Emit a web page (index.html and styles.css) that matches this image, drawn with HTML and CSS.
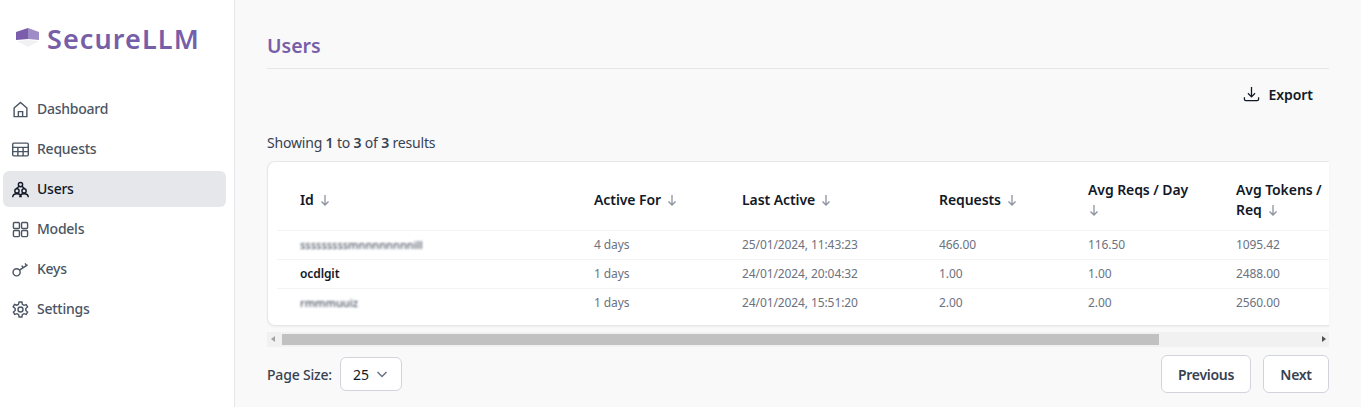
FILE: index.html
```html
<!DOCTYPE html>
<html lang="en">
<head>
<meta charset="utf-8">
<title>Users - SecureLLM</title>
<link rel="stylesheet" href="styles.css">
</head>
<body>
<div class="app">
  <aside class="sidebar">
    <div class="logo">
      <svg class="logo-mark" width="24" height="20" viewBox="0 0 24 20"><path d="M0 4 12 0v11L0 12z" fill="#7a5dab"/><path d="M12 0l11 4v8l-11-1z" fill="#9f8cc6"/><path d="M1 13l11-1 11 1-11 6z" fill="#f1f0f3"/></svg>
      <span class="logo-text">SecureLLM</span>
    </div>
    <nav class="nav">
      <a class="nav-item"><svg class="nav-icon" viewBox="0 0 24 24"><path d="M3 10 12 2l9 8v12H3z M9 22v-7h6v7"/></svg><span>Dashboard</span></a>
      <a class="nav-item"><svg class="nav-icon" viewBox="0 0 24 24"><rect x="1" y="3" width="22" height="18" rx="1.500"/><path d="M1 9h22M1 15h22M8.300 9v12M15.700 9v12"/></svg><span>Requests</span></a>
      <a class="nav-item active"><svg class="nav-icon" viewBox="0 0 24 24"><circle cx="12" cy="5" r="3"/><circle cx="7" cy="14" r="3"/><circle cx="17" cy="14" r="3"/><path d="M1 23c0-3 2-5 6-5s6 2 6 5M11 23c0-3 2-5 6-5s6 2 6 5M6 11l4-3.500M18 11l-4-3.500"/></svg><span>Users</span></a>
      <a class="nav-item"><svg class="nav-icon" viewBox="0 0 24 24"><rect x="2" y="2" width="8.500" height="8.500" rx="1.500"/><rect x="13.500" y="2" width="8.500" height="8.500" rx="1.500"/><rect x="2" y="13.500" width="8.500" height="8.500" rx="1.500"/><rect x="13.500" y="13.500" width="8.500" height="8.500" rx="1.500"/></svg><span>Models</span></a>
      <a class="nav-item"><svg class="nav-icon" viewBox="0 0 24 24"><circle cx="6.500" cy="16" r="5"/><path d="M10.500 13 22 5.500M16 9.500l-2.300-3M20.500 6.500 18.500 3.500"/></svg><span>Keys</span></a>
      <a class="nav-item"><svg class="nav-icon" viewBox="0 0 24 24"><path d="M10 1.500h4l.6 3.300 2.300 1.300 3.100-1.100 2 3.400-2.500 2.200v2.800l2.500 2.200-2 3.400-3.100-1.100-2.300 1.300-.6 3.300h-4l-.6-3.300-2.300-1.300-3.100 1.100-2-3.400 2.500-2.200v-2.800L1.600 8.300l2-3.400 3.100 1.100L9 4.800z"/><circle cx="12" cy="12" r="3.500"/></svg><span>Settings</span></a>
    </nav>
  </aside>
  <main class="main">
    <h1 class="title">Users</h1>
    <div class="toolbar">
      <button class="export"><svg class="export-icon" viewBox="0 0 24 24"><path d="M12 2v14M7 11l5 5 5-5M2 16.500v3A2 2 0 0 0 4 21.500h16a2 2 0 0 0 2-2v-3"/></svg>Export</button>
    </div>
    <p class="results">Showing <b>1</b> to <b>3</b> of <b>3</b> results</p>
    <div class="card">
      <table class="table">
        <thead>
          <tr>
            <th class="c-id">Id<svg class="sort" viewBox="0 0 12 12"><path d="M6 1v10M2.500 7.500 6 11l3.500-3.500"/></svg></th>
            <th class="c-active">Active For<svg class="sort" viewBox="0 0 12 12"><path d="M6 1v10M2.500 7.500 6 11l3.500-3.500"/></svg></th>
            <th class="c-last">Last Active<svg class="sort" viewBox="0 0 12 12"><path d="M6 1v10M2.500 7.500 6 11l3.500-3.500"/></svg></th>
            <th class="c-req">Requests<svg class="sort" viewBox="0 0 12 12"><path d="M6 1v10M2.500 7.500 6 11l3.500-3.500"/></svg></th>
            <th class="c-avg">Avg Reqs / Day<br><svg class="sort sort-wrap" viewBox="0 0 12 12"><path d="M6 1v10M2.500 7.500 6 11l3.500-3.500"/></svg></th>
            <th class="c-tok">Avg Tokens /<br>Req<svg class="sort" viewBox="0 0 12 12"><path d="M6 1v10M2.500 7.500 6 11l3.500-3.500"/></svg></th>
          </tr>
        </thead>
        <tbody>
          <tr><td class="id"><span class="blur">sssssssssmnnnnnnnnill</span></td><td>4 days</td><td>25/01/2024, 11:43:23</td><td>466.00</td><td>116.50</td><td>1095.42</td></tr>
          <tr><td class="id">ocdlgit</td><td>1 days</td><td>24/01/2024, 20:04:32</td><td>1.00</td><td>1.00</td><td>2488.00</td></tr>
          <tr><td class="id"><span class="blur">rmmmuuiz</span></td><td>1 days</td><td>24/01/2024, 15:51:20</td><td>2.00</td><td>2.00</td><td>2560.00</td></tr>
        </tbody>
      </table>
    </div>
    <div class="scrollbar">
      <span class="arrow arrow-left"></span>
      <div class="track"><div class="thumb"></div></div>
      <span class="arrow arrow-right"></span>
    </div>
    <div class="pager">
      <div class="size">
        <span class="size-label">Page Size:</span>
        <div class="select">25<svg class="chev" viewBox="0 0 12 12"><path d="M1.500 4 6 8.500 10.500 4"/></svg></div>
      </div>
      <div class="pager-buttons">
        <button class="btn">Previous</button>
        <button class="btn">Next</button>
      </div>
    </div>
  </main>
</div>
</body>
</html>
```
FILE: styles.css
```css
* { box-sizing: border-box; }
html, body { margin: 0; height: 100%; overflow: hidden; }
body { font-family: "Noto Sans", "Open Sans", sans-serif; background: #f9f9f9; color: #111827; }
.app { display: flex; height: 407px; }

.sidebar { width: 235px; flex: none; background: #fff; border-right: 1px solid #e5e7eb; padding: 0 8px 0 3px; }
.logo { display: flex; align-items: center; height: 76px; padding-left: 13px; gap: 7px; }
.logo-text { font-family: "Noto Sans", sans-serif; font-size: 27px; font-weight: 600; color: #775ea8; letter-spacing: 1.100px; }
.logo-mark { flex: none; }
.nav { display: flex; flex-direction: column; gap: 4px; margin-top: 15px; }
.nav-item { display: flex; align-items: center; height: 36px; padding-left: 8px; gap: 7px; border-radius: 6px; font-size: 14px; font-weight: 500; letter-spacing: -.25px; color: #4b5563; }
.nav-item span { margin-top: -2px; }
.nav-item.active { background: #e5e7eb; color: #111827; }
.nav-icon { width: 17px; height: 17px; flex: none; fill: none; stroke: currentColor; stroke-width: 2; margin-left: 1px; margin-right: 1px; }

.main { flex: 1; min-width: 0; padding: 32px 32px 0; display: flex; flex-direction: column; }
.title { margin: 0; height: 37px; font-size: 19.500px; line-height: 28px; font-weight: 600; color: #775ea8; border-bottom: 1px solid #e5e7eb; }
.toolbar { display: flex; justify-content: flex-end; height: 52px; padding-top: 7px; }
.export { display: flex; align-items: center; gap: 8px; height: 36px; padding: 0 16px 0 0; border: 0; background: none; font: 600 14px "Noto Sans", sans-serif; letter-spacing: -.05px; color: #111827; }
.export-icon { width: 17px; height: 18px; fill: none; stroke: #111827; stroke-width: 1.800; }
.results { margin: 12px 0 0; height: 28px; font-size: 14px; line-height: 20px; letter-spacing: -.18px; color: #374151; }
.results b { font-weight: 600; }

.card { height: 165px; background: #fff; border: 1px solid #e5e7eb; border-right: 0; border-radius: 8px 0 0 8px; box-shadow: 0 1px 2px rgba(0,0,0,.05); overflow: hidden; padding-left: 9px; }
.table { border-collapse: collapse; table-layout: fixed; width: 1100px; }
.table th { height: 68px; padding: 8px 0 0 23px; text-align: left; vertical-align: middle; font-size: 14px; line-height: 20px; font-weight: 600; letter-spacing: -.08px; color: #111827; }
.table td { height: 29px; padding: 0 0 0 23px; font-size: 12px; letter-spacing: -.1px; color: #6b7280; border-top: 1px solid #f3f4f6; white-space: nowrap; }
.table td.id { font-weight: 600; color: #111827; }
.c-id { width: 294px; }
.c-active { width: 148px; }
.c-last { width: 197px; }
.c-req { width: 149px; }
.c-avg { width: 148px; }
.c-tok { width: 164px; }
.sort { width: 12px; height: 12px; margin-left: 5px; fill: none; stroke: #8b92a0; stroke-width: 1.300; vertical-align: -1px; }
.sort-wrap { margin-left: 0; margin-top: 3px; }
.blur { color: #4b5563; font-weight: 500; font-size: 11px; letter-spacing: 0; filter: blur(.8px); display: inline-block; }

.scrollbar { display: flex; align-items: center; height: 15px; margin-top: 6px; background: #f1f1f1; }
.track { flex: 1; height: 100%; padding: 2px 0; }
.thumb { width: 877px; height: 11px; background: #c1c1c1; }
.arrow { width: 15px; height: 15px; flex: none; position: relative; }
.arrow::before { content: ""; position: absolute; top: 4px; border: 3.500px solid transparent; }
.arrow-left::before { left: 1px; border-right: 4px solid #a3a3a3; }
.arrow-right::before { right: 0; border-left: 4px solid #505050; }

.pager { display: flex; justify-content: space-between; align-items: center; margin-top: 8px; }
.size { display: flex; align-items: center; gap: 8px; }
.size-label { font-size: 14px; font-weight: 500; letter-spacing: -.2px; color: #374151; }
.select { display: flex; align-items: center; justify-content: space-between; width: 62px; height: 34px; padding: 0 13px 0 12px; background: #fff; border: 1px solid #d1d5db; border-radius: 6px; font-size: 14px; color: #111827; }
.chev { width: 12px; height: 12px; fill: none; stroke: #6b7280; stroke-width: 1.500; }
.pager-buttons { display: flex; gap: 12px; }
.btn { height: 38px; min-width: 66px; padding: 0 16px; background: #fff; border: 1px solid #d1d5db; border-radius: 6px; font: 600 14px "Noto Sans", sans-serif; letter-spacing: -.3px; color: #374151; }
```
